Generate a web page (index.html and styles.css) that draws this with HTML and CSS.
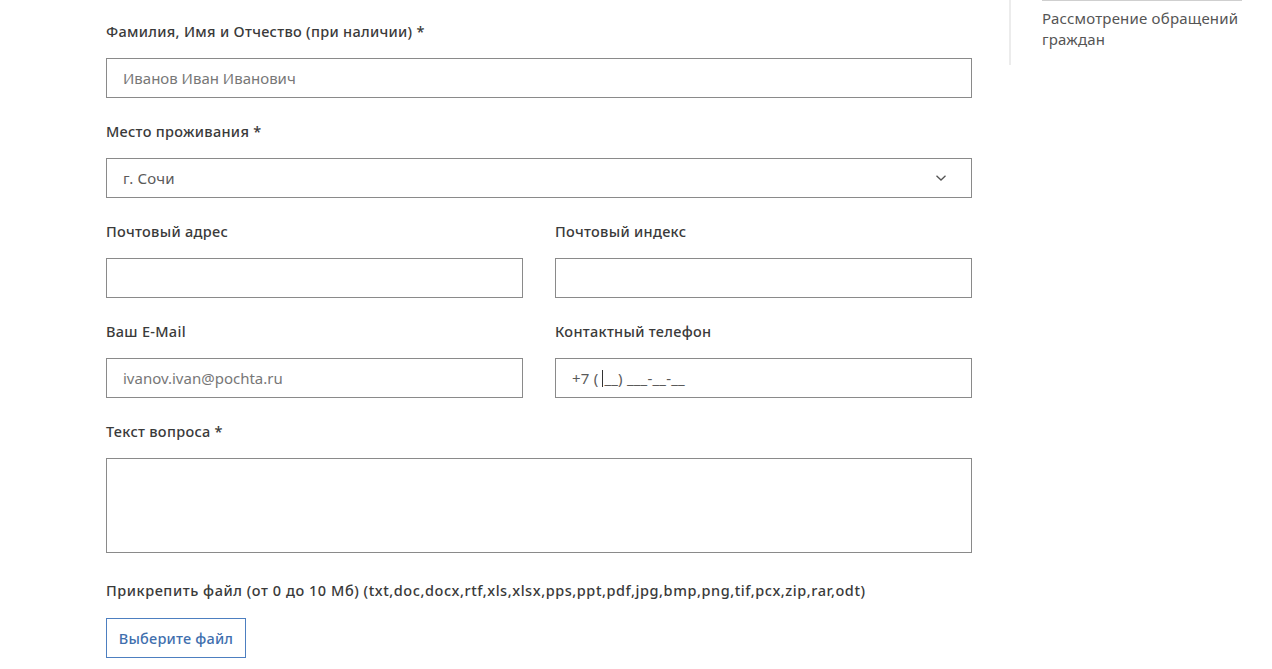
FILE: index.html
```html
<!DOCTYPE html>
<html lang="ru">
<head>
<meta charset="utf-8">
<link rel="stylesheet" href="styles.css">
</head>
<body>
<div class="page">
  <form class="form">
    <div class="field">
      <label class="label">Фамилия, Имя и Отчество (при наличии) *</label>
      <div class="input"><span class="ph">Иванов Иван Иванович</span></div>
    </div>
    <div class="field">
      <label class="label">Место проживания *</label>
      <div class="input select"><span class="val">г. Сочи</span>
        <svg class="chev" width="12" height="8" viewBox="0 0 12 8"><path d="M1.5 1.8 L6 6 L10.5 1.8" fill="none" stroke="#555" stroke-width="1.3"/></svg>
      </div>
    </div>
    <div class="row">
      <div class="field">
        <label class="label">Почтовый адрес</label>
        <div class="input"></div>
      </div>
      <div class="field">
        <label class="label">Почтовый индекс</label>
        <div class="input"></div>
      </div>
    </div>
    <div class="row">
      <div class="field">
        <label class="label">Ваш E-Mail</label>
        <div class="input"><span class="ph">ivanov.ivan@pochta.ru</span></div>
      </div>
      <div class="field">
        <label class="label">Контактный телефон</label>
        <div class="input"><span class="val">+7 (<span class="caret"></span>__) ___-__-__</span></div>
      </div>
    </div>
    <div class="field">
      <label class="label">Текст вопроса *</label>
      <div class="input textarea"></div>
    </div>
    <div class="attach">
      <div class="label attach-label">Прикрепить файл (от 0 до 10 Мб) (txt,doc,docx,rtf,xls,xlsx,pps,ppt,pdf,jpg,bmp,png,tif,pcx,zip,rar,odt)</div>
      <button type="button" class="btn">Выберите файл</button>
    </div>
  </form>
  <aside class="side">
    <div class="side-item">Рассмотрение обращений граждан</div>
  </aside>
</div>
</body>
</html>
```

FILE: styles.css
```css
* { box-sizing: border-box; }
html, body { margin: 0; background: #fff; }
body {
  font-family: "Noto Sans", "Open Sans", sans-serif;
  color: #333;
}
.page {
  display: flex;
  padding-left: 106px;
}
.form {
  width: 866px;
  padding-top: 21px;
  display: flex;
  flex-direction: column;
  gap: 23px;
}
.row {
  display: grid;
  grid-template-columns: 417px 417px;
  column-gap: 32px;
}
.field {
  display: flex;
  flex-direction: column;
  gap: 17px;
}
.label {
  display: block;
  font-size: 14.5px;
  line-height: 20px;
  font-weight: 500;
  color: #3a3a3a;
  letter-spacing: 0.3px;
}
.attach-label { letter-spacing: 0.55px; }
.input {
  height: 40px;
  border: 1px solid #8a8a8a;
  display: flex;
  align-items: center;
  padding: 0 16px;
  font-size: 15px;
  color: #6e6e6e;
}
.ph { color: #777; }
.val { color: #5a5a5a; display: flex; align-items: center; letter-spacing: 0.2px; }
.select { justify-content: space-between; padding-right: 24px; }
.chev { display: block; }
.caret {
  display: inline-block;
  width: 1px;
  height: 17px;
  background: #333;
  margin: 0 1px 0 4px;
}
.textarea { height: 95px; }
.attach {
  margin-top: 4px;
  display: flex;
  flex-direction: column;
  align-items: flex-start;
  gap: 18px;
}
.btn {
  width: 140px;
  height: 40px;
  background: #fff;
  border: 1px solid #4d7fc0;
  color: #3f6fae;
  font-family: inherit;
  font-size: 14.5px;
  font-weight: 500;
  letter-spacing: 0.2px;
  padding: 0;
  cursor: pointer;
}
.side {
  margin-left: 37px;
  border-left: 2px solid #ececec;
  height: 65px;
  padding-left: 31px;
}
.side-item {
  width: 200px;
  border-top: 2px solid #cfcfcf;
  padding-top: 7px;
  font-size: 15px;
  line-height: 21px;
  letter-spacing: 0.2px;
  color: #555;
  margin-top: -1px;
}
```
